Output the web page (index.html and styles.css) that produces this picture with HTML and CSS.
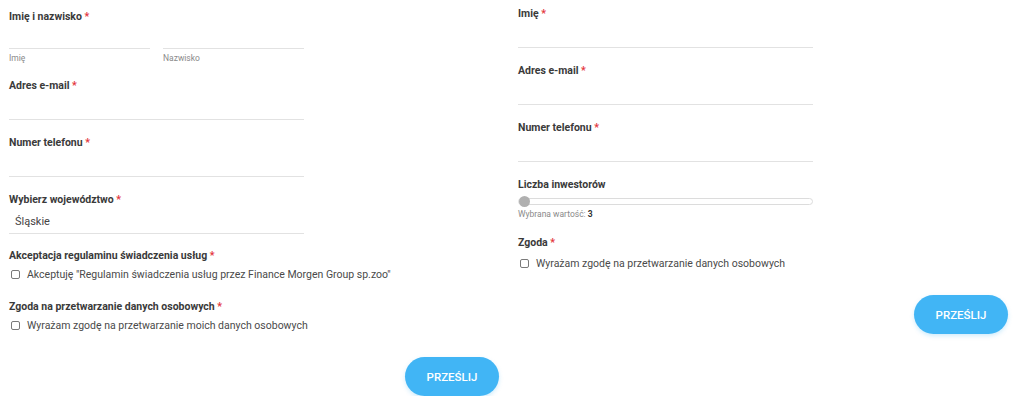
FILE: index.html
```html
<!DOCTYPE html>
<html lang="pl">
<head>
    <meta charset="UTF-8">
    <meta name="viewport" content="width=device-width, initial-scale=1.0">
    <title>Formularz kontaktowy</title>
    <link rel="stylesheet" href="styles.css">
</head>
<body>

    <div class="forms">

        <!-- Formularz po lewej -->
        <form class="form form-left">
            <div class="field field-name">
                <label class="label">Imię i nazwisko <span class="req">*</span></label>
                <div class="name-row">
                    <div class="name-part">
                        <input type="text" class="input">
                        <span class="sub">Imię</span>
                    </div>
                    <div class="name-part">
                        <input type="text" class="input">
                        <span class="sub">Nazwisko</span>
                    </div>
                </div>
            </div>

            <div class="field">
                <label class="label">Adres e-mail <span class="req">*</span></label>
                <input type="email" class="input">
            </div>

            <div class="field">
                <label class="label">Numer telefonu <span class="req">*</span></label>
                <input type="tel" class="input">
            </div>

            <div class="field field-select">
                <label class="label">Wybierz województwo <span class="req">*</span></label>
                <div class="select">Śląskie</div>
            </div>

            <div class="field field-check">
                <label class="label">Akceptacja regulaminu świadczenia usług <span class="req">*</span></label>
                <label class="check"><input type="checkbox"> Akceptuję "Regulamin świadczenia usług przez Finance Morgen Group sp.zoo"</label>
            </div>

            <div class="field field-check field-last">
                <label class="label">Zgoda na przetwarzanie danych osobowych <span class="req">*</span></label>
                <label class="check"><input type="checkbox"> Wyrażam zgodę na przetwarzanie moich danych osobowych</label>
            </div>

            <div class="submit">
                <button type="button">PRZEŚLIJ</button>
            </div>
        </form>

        <!-- Formularz po prawej -->
        <form class="form form-right">
            <div class="field">
                <label class="label">Imię <span class="req">*</span></label>
                <input type="text" class="input">
            </div>

            <div class="field">
                <label class="label">Adres e-mail <span class="req">*</span></label>
                <input type="email" class="input">
            </div>

            <div class="field">
                <label class="label">Numer telefonu <span class="req">*</span></label>
                <input type="tel" class="input">
            </div>

            <div class="field field-range">
                <label class="label">Liczba inwestorów</label>
                <input type="range" class="range" min="3" max="100" value="3">
                <span class="sub">Wybrana wartość: <b>3</b></span>
            </div>

            <div class="field field-check field-last">
                <label class="label">Zgoda <span class="req">*</span></label>
                <label class="check"><input type="checkbox"> Wyrażam zgodę na przetwarzanie danych osobowych</label>
            </div>

            <div class="submit">
                <button type="button">PRZEŚLIJ</button>
            </div>
        </form>

    </div>

</body>
</html>
```

FILE: styles.css
```css
body {
    margin: 0;
    font-family: 'Roboto', 'Liberation Sans', sans-serif;
    background: #fff;
    color: #444;
}

.forms {
    display: flex;
}

.form {
    width: 509px;
    padding: 0 10px 0 9px;
    box-sizing: border-box;
}

.form-left {
    padding-top: 9px;
}

.form-right {
    padding-top: 6px;
}

.field {
    width: 295px;
    margin-bottom: 15px;
}

.label {
    display: block;
    height: 16px;
    line-height: 16px;
    font-size: 10.5px;
    font-weight: 700;
    color: #3a3a3a;
    margin-bottom: 4px;
}

.req {
    color: #e4343c;
}

.input {
    display: block;
    width: 100%;
    height: 22px;
    box-sizing: border-box;
    border: none;
    border-bottom: 1px solid #e2e2e2;
    background: transparent;
    padding: 0 6px;
    font-family: inherit;
    font-size: 11px;
    outline: none;
}

.name-row {
    display: flex;
    gap: 13px;
}

.name-part {
    flex: 1;
}

.name-part .input {
    height: 20px;
}

.sub {
    display: block;
    margin-top: 4px;
    height: 10px;
    line-height: 10px;
    font-size: 8.5px;
    color: #8a8a8a;
}

.sub b {
    color: #333;
}

.select {
    height: 22px;
    line-height: 20px;
    box-sizing: border-box;
    border-bottom: 1px solid #e2e2e2;
    padding-left: 6px;
    font-size: 11px;
    color: #444;
}

.field-select {
    margin-bottom: 14px;
}

.field-check .label {
    margin-bottom: 2px;
}

.check {
    display: flex;
    align-items: center;
    gap: 7px;
    height: 16px;
    font-size: 10.5px;
    color: #4a4a4a;
    padding-left: 2px;
    white-space: nowrap;
}

.check input {
    appearance: none;
    -webkit-appearance: none;
    width: 9px;
    height: 9px;
    margin: 0;
    border: 1px solid #7a7a7a;
    border-radius: 2px;
    background: #fff;
    flex-shrink: 0;
}

.form-left .field-check:not(.field-last) {
    margin-bottom: 17px;
}

.field-last {
    margin-bottom: 24px;
}

.form-right .field-check .label {
    margin-bottom: 4px;
}

.field-range {
    margin-bottom: 16px;
}

.field-range .label {
    margin-bottom: 5px;
}

.range {
    -webkit-appearance: none;
    appearance: none;
    display: block;
    width: 100%;
    height: 7px;
    margin: 0;
    border: 1px solid #dcdcdc;
    border-radius: 4px;
    background: #fff;
    box-sizing: border-box;
}

.range::-webkit-slider-thumb {
    -webkit-appearance: none;
    appearance: none;
    width: 11px;
    height: 11px;
    border-radius: 50%;
    background: #b0b0b0;
}

.field-range .sub {
    margin-top: 4px;
}

.submit {
    display: flex;
    justify-content: flex-end;
}

button {
    width: 94px;
    height: 39px;
    border: none;
    border-radius: 20px;
    background-color: #41b5f5;
    color: #fff;
    font-family: inherit;
    font-size: 11.5px;
    font-weight: 500;
    box-shadow: 0 2px 4px rgba(65, 181, 245, 0.25);
    cursor: pointer;
}
```
